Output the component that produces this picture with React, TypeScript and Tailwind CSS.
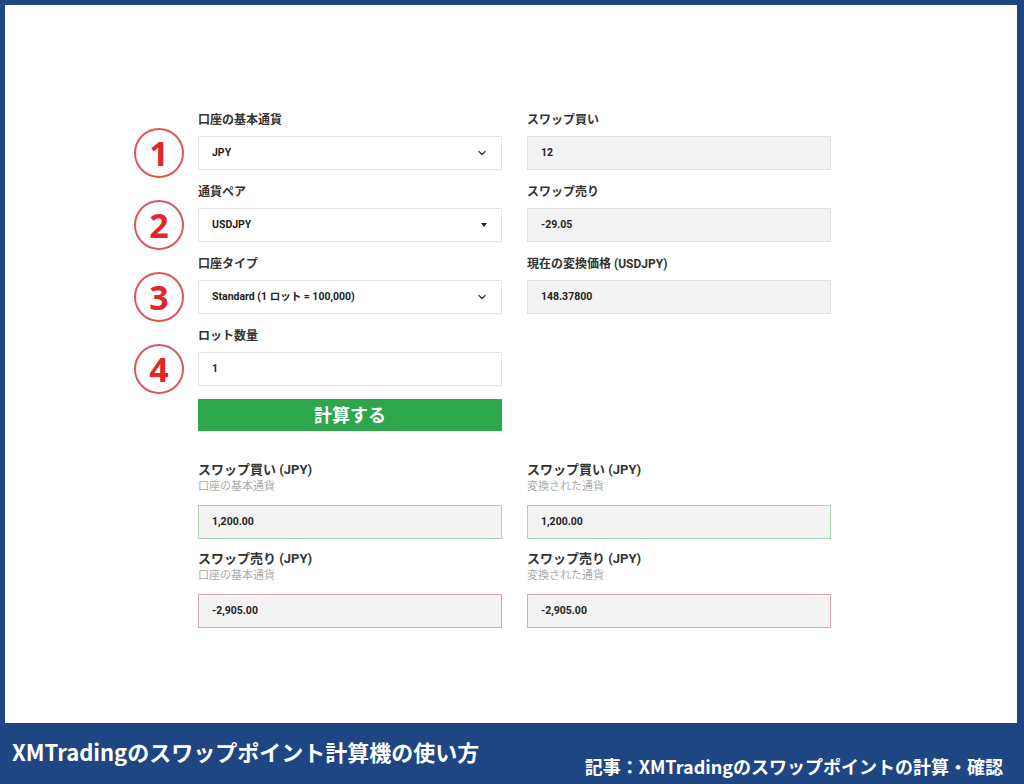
import { ChevronDown } from "lucide-react";

const FONT = "font-['Roboto','Noto_Sans_CJK_JP',sans-serif]";

function Circle({ n }: { n: number }) {
  return (
    <div className="-ml-[3px] mr-[14px] grid h-[50px] w-[50px] shrink-0 place-items-center rounded-full border-2 border-[#d9585a]">
      <span className="font-['Noto_Sans','Noto_Sans_CJK_JP',sans-serif] text-[34px] font-bold leading-none text-[#e3262b]">
        {n}
      </span>
    </div>
  );
}

function InputBox({
  value,
  tone = "white",
  icon,
}: {
  value: string;
  tone?: "white" | "gray" | "green" | "red";
  icon?: "chevron" | "caret";
}) {
  const toneClass = {
    white: "bg-white border-[#e4e4e4] shadow-[0_1px_2px_rgba(0,0,0,0.04)]",
    gray: "bg-[#f3f3f3] border-[#e2e2e2]",
    green: "bg-[#f3f3f3] border-[#a9d3b1]",
    red: "bg-[#f3f3f3] border-[#dca5ad]",
  }[tone];

  return (
    <div
      className={`flex h-[34px] w-[304px] shrink-0 items-center justify-between border px-[13px] ${toneClass}`}
    >
      <span className="text-[10.5px] font-bold text-[#222]">{value}</span>
      {icon === "chevron" && (
        <ChevronDown size={12} strokeWidth={2.6} className="text-[#333]" />
      )}
      {icon === "caret" && (
        <span className="mr-[1px] h-0 w-0 border-x-[3.5px] border-t-[4px] border-x-transparent border-t-[#222]" />
      )}
    </div>
  );
}

function FieldRow({
  n,
  leftLabel,
  left,
  leftIcon,
  rightLabel,
  right,
}: {
  n: number;
  leftLabel: string;
  left: string;
  leftIcon?: "chevron" | "caret";
  rightLabel?: string;
  right?: string;
}) {
  return (
    <div className="mt-[12px]">
      <div className="mb-[6px] flex h-[20px] items-center text-[12px] font-bold text-[#333]">
        <div className="w-[61px] shrink-0" />
        <div className="w-[304px] shrink-0">{leftLabel}</div>
        <div className="w-[25px] shrink-0" />
        <div className="w-[304px] shrink-0">{rightLabel}</div>
      </div>
      <div className="flex h-[34px] items-center">
        <Circle n={n} />
        <InputBox value={left} icon={leftIcon} />
        <div className="w-[25px] shrink-0" />
        {right !== undefined && <InputBox value={right} tone="gray" />}
      </div>
    </div>
  );
}

function ResultBlock({
  label,
  sub,
  value,
  tone,
}: {
  label: string;
  sub: string;
  value: string;
  tone: "green" | "red";
}) {
  return (
    <div className="w-[304px]">
      <div className="h-[18px] text-[13px] font-bold leading-[18px] text-[#333]">
        {label}
      </div>
      <div className="h-[16px] text-[11px] leading-[16px] text-[#ababab]">{sub}</div>
      <div className="mt-[10px]">
        <InputBox value={value} tone={tone} />
      </div>
    </div>
  );
}

export default function App() {
  return (
    <div className={`flex h-[784px] w-[1024px] flex-col bg-[#1f4582] ${FONT}`}>
      <div className="ml-[5px] mr-[7px] mt-[5px] h-[718px] bg-white pl-[132px] pt-[93px]">
        <FieldRow
          n={1}
          leftLabel="口座の基本通貨"
          left="JPY"
          leftIcon="chevron"
          rightLabel="スワップ買い"
          right="12"
        />
        <FieldRow
          n={2}
          leftLabel="通貨ペア"
          left="USDJPY"
          leftIcon="caret"
          rightLabel="スワップ売り"
          right="-29.05"
        />
        <FieldRow
          n={3}
          leftLabel="口座タイプ"
          left="Standard (1 ロット = 100,000)"
          leftIcon="chevron"
          rightLabel="現在の変換価格 (USDJPY)"
          right="148.37800"
        />
        <FieldRow n={4} leftLabel="ロット数量" left="1" />

        <div className="ml-[61px] mt-[13px] flex h-[32px] w-[304px] items-center justify-center bg-[#2ea64c] text-[18px] font-bold text-white">
          計算する
        </div>

        <div className="ml-[61px] mt-[30px] flex gap-[25px]">
          <ResultBlock
            label="スワップ買い (JPY)"
            sub="口座の基本通貨"
            value="1,200.00"
            tone="green"
          />
          <ResultBlock
            label="スワップ買い (JPY)"
            sub="変換された通貨"
            value="1,200.00"
            tone="green"
          />
        </div>
        <div className="ml-[61px] mt-[11px] flex gap-[25px]">
          <ResultBlock
            label="スワップ売り (JPY)"
            sub="口座の基本通貨"
            value="-2,905.00"
            tone="red"
          />
          <ResultBlock
            label="スワップ売り (JPY)"
            sub="変換された通貨"
            value="-2,905.00"
            tone="red"
          />
        </div>
      </div>

      <div className="flex flex-1 items-start justify-between pl-[12px] pr-[21px] font-['Noto_Sans_CJK_JP',sans-serif] font-bold text-white">
        <div className="pt-[13px] text-[22px] leading-[30px]">
          XMTradingのスワップポイント計算機の使い方
        </div>
        <div className="pt-[31px] text-[18px] leading-[24px]">
          記事：XMTradingのスワップポイントの計算・確認
        </div>
      </div>
    </div>
  );
}
